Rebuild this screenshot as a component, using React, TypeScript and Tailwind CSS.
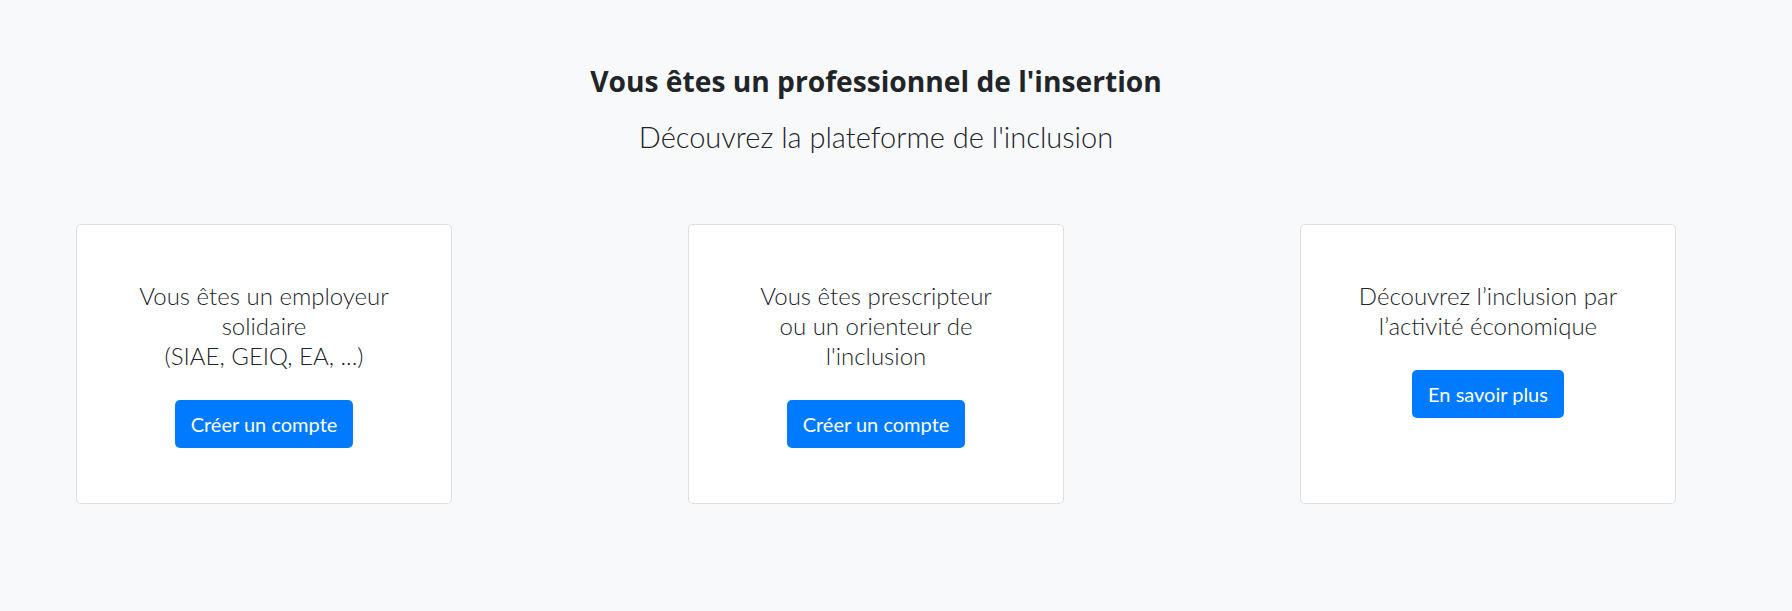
const cards = [
  {
    lines: ["Vous êtes un employeur", "solidaire", "(SIAE, GEIQ, EA, ...)"],
    cta: "Créer un compte",
  },
  {
    lines: ["Vous êtes prescripteur", "ou un orienteur de", "l'inclusion"],
    cta: "Créer un compte",
  },
  {
    lines: ["Découvrez l’inclusion par", "l’activité économique"],
    cta: "En savoir plus",
  },
];

const App = () => {
  return (
    <div className="min-h-[611px] bg-[#f8f9fa] font-['Lato',sans-serif] text-[#212529]">
      <div className="ml-[76px] w-[1600px] pt-[64px]">
        {/* Header */}
        <h2 className="text-center font-['Open_Sans',sans-serif] text-[28.2px] font-bold leading-[34px]">
          Vous êtes un professionnel de l'insertion
        </h2>
        <p className="mt-[20px] text-center text-[29px] font-light leading-[38px]">
          Découvrez la plateforme de l'inclusion
        </p>

        {/* Cards */}
        <div className="mt-[68px] flex justify-between">
          {cards.map((card, i) => (
            <div
              key={i}
              className="flex h-[280px] w-[376px] flex-col items-center rounded-[5px] border border-[#dfdfdf] bg-white pt-[56px] text-center"
            >
              <p className="text-[24px] font-light leading-[30px]">
                {card.lines.map((line, j) => (
                  <span key={j} className="block">
                    {line}
                  </span>
                ))}
              </p>
              <button className="mt-[29px] h-[48px] rounded-[5px] bg-[#007bff] px-[16px] text-[20px] text-white">
                {card.cta}
              </button>
            </div>
          ))}
        </div>
      </div>
    </div>
  );
};

export default App;
